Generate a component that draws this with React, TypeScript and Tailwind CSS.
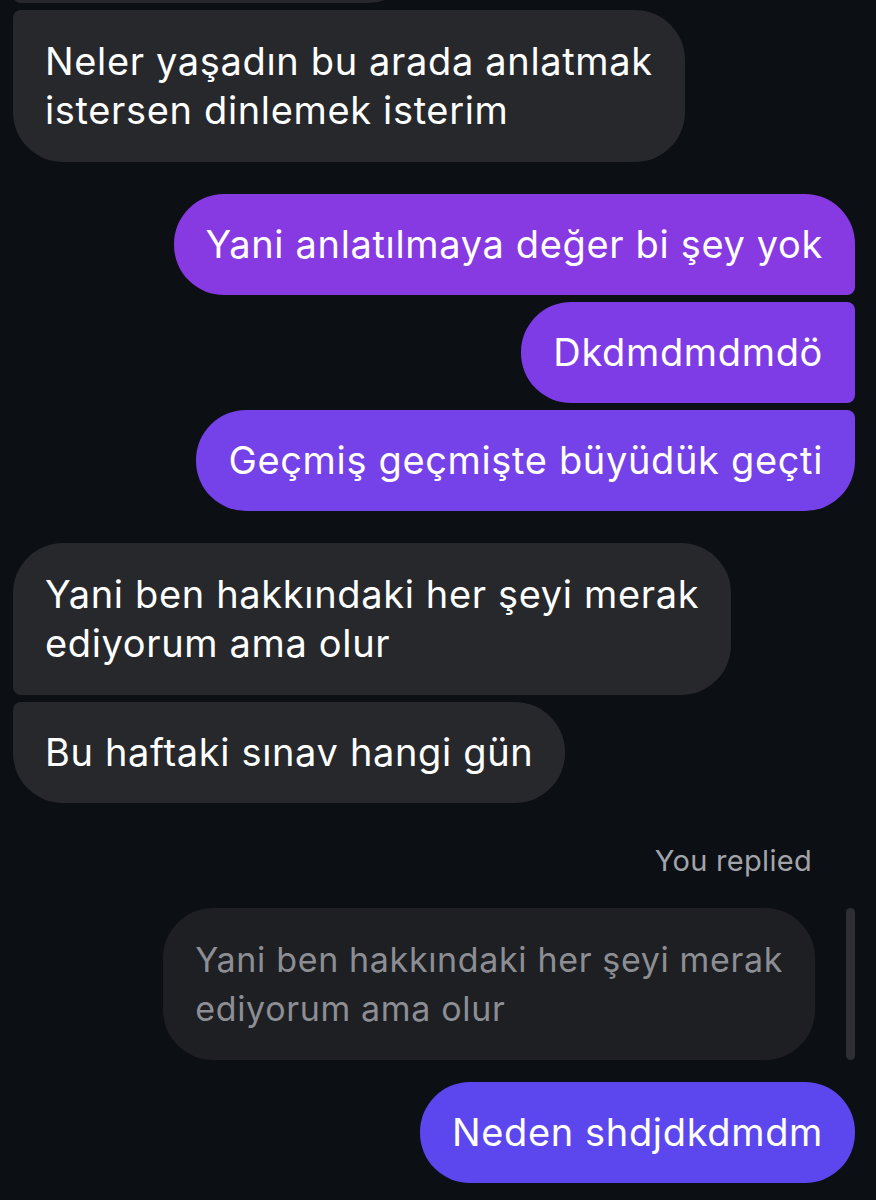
import React from 'react';

type Corner = 'lg' | 'sm';

type Msg = {
  text: string[];
  mine: boolean;
  top: Corner;
  bottom: Corner;
  color?: string;
};

const messages: Msg[] = [
  { text: ['Neler yaşadın bu arada anlatmak', 'istersen dinlemek isterim'], mine: false, top: 'sm', bottom: 'lg' },
  { text: ['Yani anlatılmaya değer bi şey yok'], mine: true, top: 'lg', bottom: 'sm', color: 'bg-[#8739e2]' },
  { text: ['Dkdmdmdmdö'], mine: true, top: 'sm', bottom: 'sm', color: 'bg-[#7e3ce6]' },
  { text: ['Geçmiş geçmişte büyüdük geçti'], mine: true, top: 'sm', bottom: 'lg', color: 'bg-[#7541e9]' },
  { text: ['Yani ben hakkındaki her şeyi merak', 'ediyorum ama olur'], mine: false, top: 'lg', bottom: 'sm' },
  { text: ['Bu haftaki sınav hangi gün'], mine: false, top: 'sm', bottom: 'lg' },
];

const Bubble: React.FC<{ msg: Msg }> = ({ msg }) => {
  const side = msg.mine
    ? `${msg.top === 'lg' ? 'rounded-tr-[50px]' : 'rounded-tr-[8px]'} ${msg.bottom === 'lg' ? 'rounded-br-[50px]' : 'rounded-br-[8px]'} rounded-l-[50px]`
    : `${msg.top === 'lg' ? 'rounded-tl-[50px]' : 'rounded-tl-[8px]'} ${msg.bottom === 'lg' ? 'rounded-bl-[50px]' : 'rounded-bl-[8px]'} rounded-r-[50px]`;
  const pad = msg.text.length > 1 ? 'py-[27px]' : 'py-[26px]';
  return (
    <div className={`flex ${msg.mine ? 'justify-end' : 'justify-start'}`}>
      <div
        className={`${side} ${msg.mine ? msg.color : 'bg-[#26282c]'} ${pad} px-8 text-[38px] leading-[49px] tracking-[0.65px] text-white`}
      >
        {msg.text.map((line, i) => (
          <div key={i} className="whitespace-nowrap">
            {line}
          </div>
        ))}
      </div>
    </div>
  );
};

export default function App() {
  const [first, ...rest] = messages;
  return (
    <div className="h-[1200px] w-[876px] overflow-hidden bg-[#0c0f13] pl-[13px] pr-[21px] font-['Inter',sans-serif]">
      {/* tail of an earlier received bubble */}
      <div className="-mt-[97px] h-[100px] w-[405px] rounded-tl-[50px] rounded-bl-[8px] rounded-r-[50px] bg-[#26282c]" />
      <div className="mt-[7px] flex flex-col">
        <Bubble msg={first} />
        <div className="mt-8 flex flex-col gap-[7px]">
          {rest.slice(0, 3).map((m, i) => (
            <Bubble key={i} msg={m} />
          ))}
        </div>
        <div className="mt-8 flex flex-col gap-[7px]">
          {rest.slice(3).map((m, i) => (
            <Bubble key={i} msg={m} />
          ))}
        </div>
      </div>

      <div className="mt-[42px] pr-[43px] text-right text-[29px] leading-[32px] tracking-[0.3px] text-[#a3a4aa]">
        You replied
      </div>

      <div className="mt-[31px] flex items-stretch justify-end gap-[31px]">
        <div className="rounded-[50px] bg-[#1d1f23] px-8 py-[27px] text-[34px] leading-[49px] tracking-[0.65px] text-[#8d8e94]">
          <div className="whitespace-nowrap">Yani ben hakkındaki her şeyi merak</div>
          <div className="whitespace-nowrap">ediyorum ama olur</div>
        </div>
        <div className="w-[9px] rounded-full bg-[#2d2f34]" />
      </div>

      <div className="mt-[22px] flex justify-end">
        <div className="rounded-[50px] bg-[#5c47ef] px-8 py-[26px] text-[38px] leading-[49px] tracking-[0.65px] whitespace-nowrap text-white">
          Neden shdjdkdmdm
        </div>
      </div>
    </div>
  );
}
